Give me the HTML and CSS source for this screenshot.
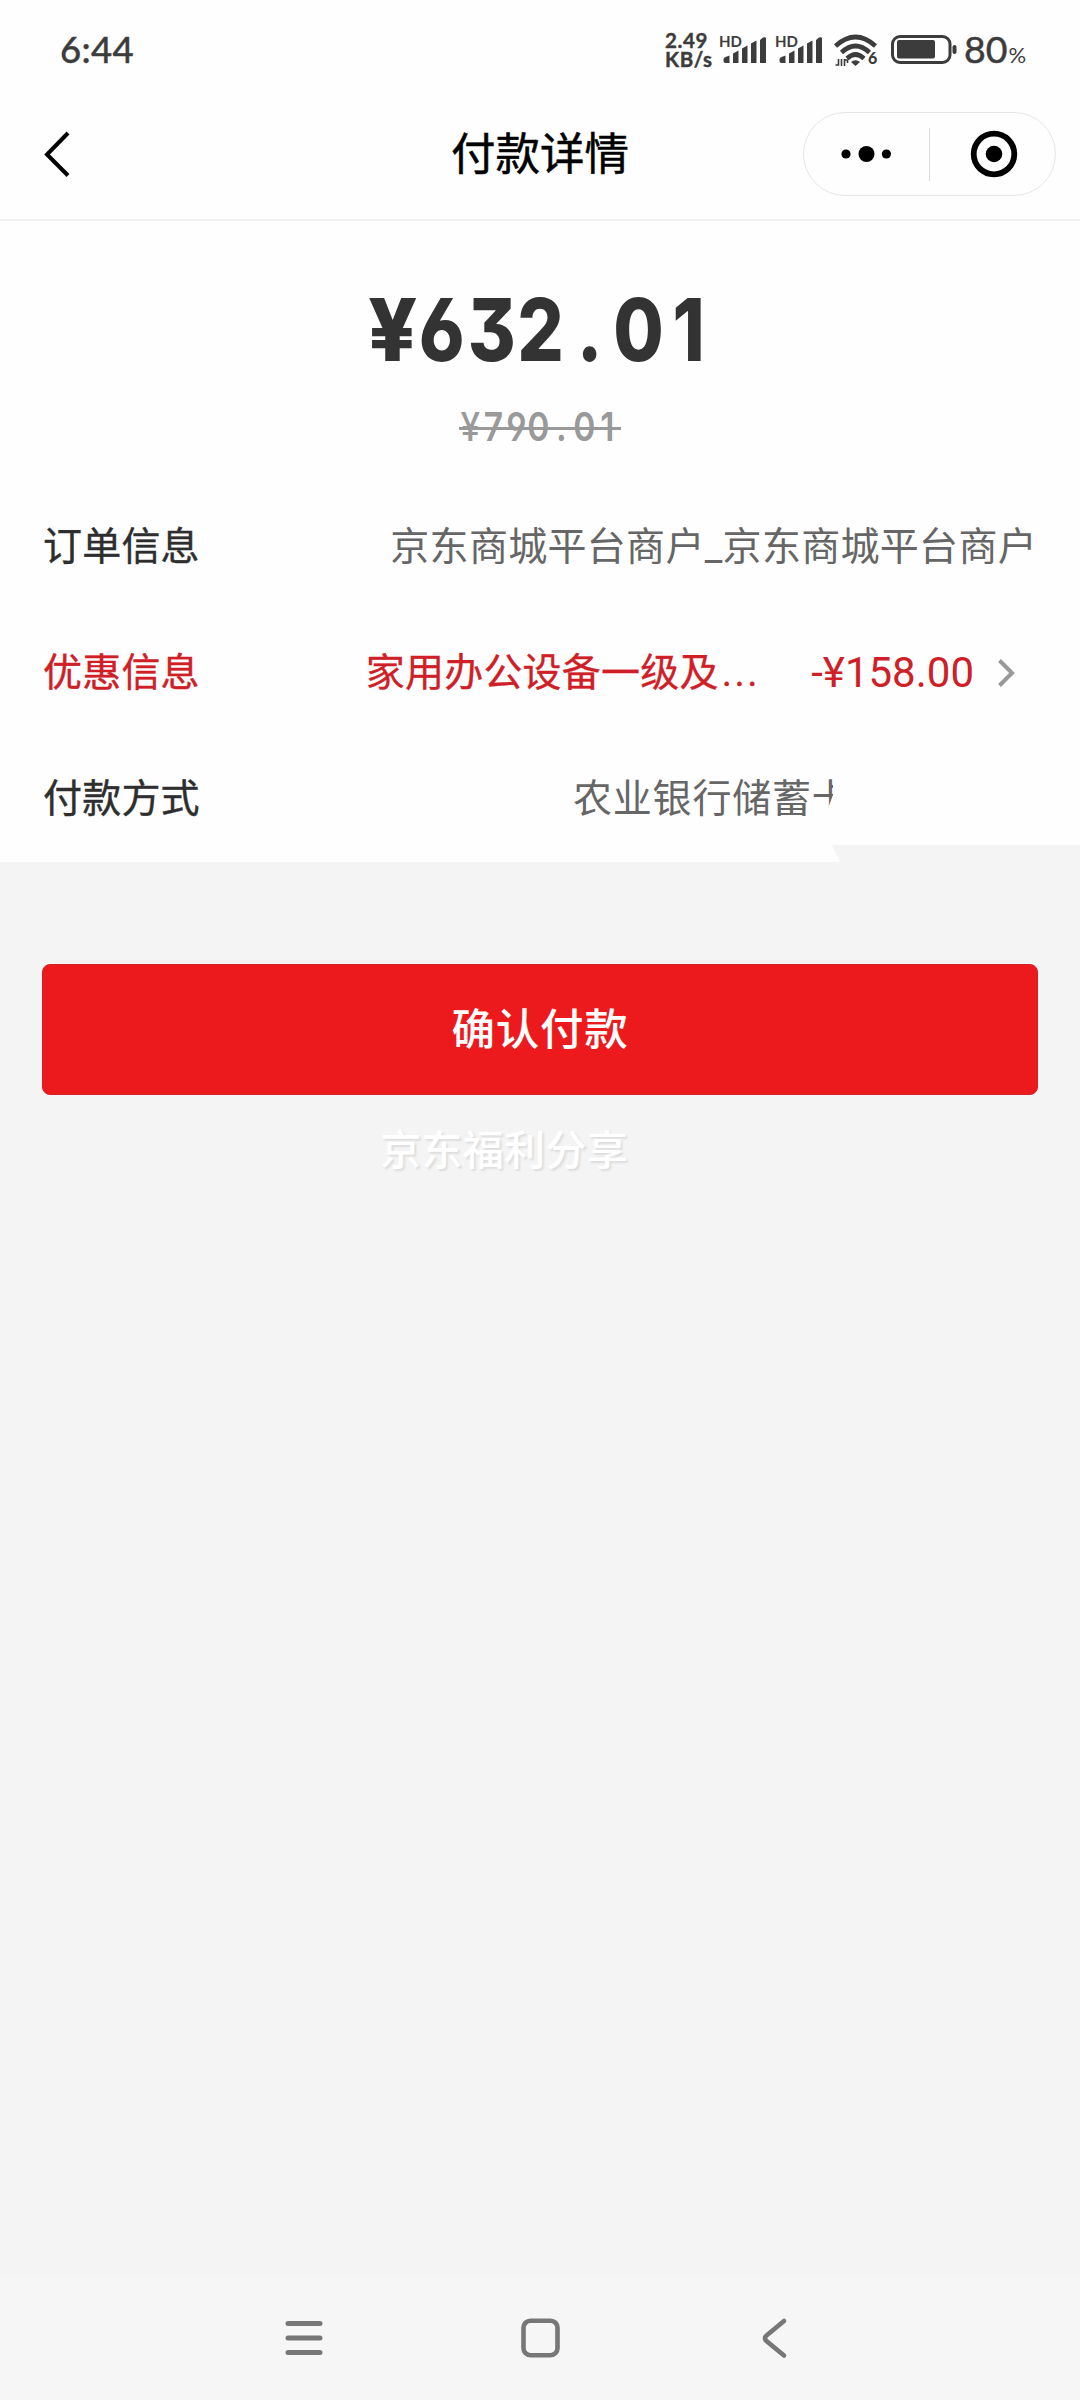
FILE: index.html
```html
<!DOCTYPE html>
<html lang="zh-CN">
<head>
<meta charset="utf-8">
<title>付款详情</title>
<link rel="stylesheet" href="styles.css">
</head>
<body>
<svg width="0" height="0" class="defs">
  <defs>
    <g id="signal">
      <path d="M4.500 27v-1.500q0-2 2-2.500l4-1.500v7.500h-4q-2 0-2-2Z"/>
      <path d="M14 29v-9.500l5.500-3v12.500ZM23 29v-14.500l5.500-3v17.500ZM32 29v-19.500l5.500-3v22.500ZM41 29v-23l3-2.500q3-1 3 1v24.500Z"/>
    </g>
  </defs>
</svg>
<header class="status">
  <div class="clock">6:44</div>
  <div class="status-icons">
    <div class="speed"><span>2.49</span><span>KB/s</span></div>
    <div class="cell"><span class="hd">HD</span><svg width="50" height="36" viewBox="0 0 50 36"><use href="#signal"/></svg></div>
    <div class="cell"><span class="hd">HD</span><svg width="50" height="36" viewBox="0 0 50 36"><use href="#signal"/></svg></div>
    <div class="wifi">
      <svg width="44" height="36" viewBox="0 0 44 36">
        <g fill="none" stroke="#3c3c3c" stroke-width="4.600">
          <path d="M1.500 12Q21.500-6 41.500 12"/>
          <path d="M7.500 18.500Q21.500 5.500 35.500 18.500"/>
          <path d="M13 24.500Q21.500 16.500 30 24.500"/>
        </g>
        <path d="M17 28q4.500-3.500 9 0l-4.500 4Z"/>
        <path d="M4.500 25v6h-3M7.500 25v7M10.500 25v7M10.500 26h3v3" fill="none" stroke="#3c3c3c" stroke-width="1.600"/>
      </svg>
      <span class="gen">6</span>
    </div>
    <svg class="battery" width="66" height="30" viewBox="0 0 66 30">
      <rect x="1.500" y="2.500" width="57.500" height="26" rx="7.500" fill="none" stroke="#3c3c3c" stroke-width="3"/>
      <rect x="6" y="6" width="38" height="18.500" rx="2"/>
      <rect x="61.500" y="11" width="4" height="9" rx="2"/>
    </svg>
    <div class="percent">80<small>%</small></div>
  </div>
</header>
<nav class="titlebar">
  <svg class="back" width="28" height="48" viewBox="0 0 28 48"><path d="M25 3 4 24.500 25 45.500" fill="none" stroke="#000" stroke-width="4"/></svg>
  <h1>付款详情</h1>
  <div class="capsule">
    <svg width="50" height="20" viewBox="0 0 50 20"><circle cx="5" cy="10" r="4.600"/><circle cx="25.500" cy="10" r="8"/><circle cx="45.400" cy="10" r="4.600"/></svg>
    <i></i>
    <svg width="48" height="48" viewBox="0 0 48 48"><circle cx="24" cy="24" r="20.300" fill="none" stroke="#000" stroke-width="5.800"/><circle cx="24" cy="24" r="8.300"/></svg>
  </div>
</nav>
<main>
  <section class="bill">
    <div class="total"><span class="yen">¥</span><span>6</span><span>3</span><span>2</span><span>.</span><span>0</span><span>1</span></div>
    <div class="original"><span class="yen">¥</span><span>7</span><span>9</span><span>0</span><span>.</span><span>0</span><span>1</span></div>
    <div class="row"><span class="label">订单信息</span><span class="value">京东商城平台商户_京东商城平台商户</span></div>
    <div class="row promo"><span class="label">优惠信息</span><span class="value">家用办公设备一级及<span class="dots">...</span></span><span class="amount">-¥158.00</span>
      <svg width="20" height="30" viewBox="0 0 20 30"><path d="M2.500 2.500 15 15 2.500 27.500" fill="none" stroke="#999" stroke-width="4"/></svg></div>
    <div class="row method"><span class="label">付款方式</span><span class="value">农业银行储蓄卡</span></div>
  </section>
  <button class="pay">确认付款</button>
  <p class="signature">京东福利分享</p>
</main>
<footer class="sysnav">
  <svg width="40" height="44" viewBox="0 0 40 44"><path d="M4 7.500h32M4 22h32M4 36.500h32" stroke-width="5"/></svg>
  <svg width="44" height="44" viewBox="0 0 44 44"><rect x="4.500" y="4.700" width="34" height="34.500" rx="7" stroke-width="4.600"/></svg>
  <svg width="32" height="44" viewBox="0 0 32 44"><path d="M26 5 8.500 19.500q-3 2.500 0 5.500L26 39.500" stroke-width="4.600"/></svg>
</footer>
</body>
</html>
```
FILE: styles.css
```css
* { box-sizing: border-box; }
body {
  margin: 0;
  width: 1080px;
  height: 2400px;
  display: flex;
  flex-direction: column;
  background: #f4f4f4;
  font-family: Roboto, "Noto Sans CJK SC", sans-serif;
  color: #2e2e2e;
}
.defs { position: absolute; }
.status {
  height: 100px;
  background: #fefefe;
  display: flex;
  justify-content: space-between;
  padding: 0 52px 0 60px;
  color: #3c3c3c;
  fill: #3c3c3c;
}
.clock {
  font: 500 36.500px/98px Lato, sans-serif;
  -webkit-text-stroke: .4px #3c3c3c;
  letter-spacing: .3px;
}
.status-icons { display: flex; align-items: flex-start; padding-top: 34px; }
.speed {
  width: 54px;
  font: 700 20.500px/19px Lato, sans-serif;
  letter-spacing: .6px;
  -webkit-text-stroke: .4px #3c3c3c;
  display: flex;
  flex-direction: column;
  margin-top: -3px;
}
.cell { position: relative; width: 56px; height: 36px; }
.cell svg { display: block; }
.hd { position: absolute; left: 0; top: 0; font: 700 15px/14px Lato, sans-serif; }
.wifi { position: relative; width: 60px; padding-left: 3px; }
.gen { position: absolute; left: 37px; top: 16px; font: 900 16px/16px Lato, sans-serif; }
.percent { font: 400 37.500px/34px Lato, sans-serif; margin: -2px 0 0 7px; white-space: nowrap; -webkit-text-stroke: .5px #3c3c3c; width: 64px; }
.percent small { font-size: 22px; margin-left: 1px; -webkit-text-stroke: 0; }
.titlebar {
  height: 121px;
  background: #fefefe;
  border-bottom: 2px solid #f0f0f0;
  display: grid;
  grid-template-columns: 253px 1fr 253px;
  align-items: center;
  padding: 0 24px 11px;
}
.back { margin-left: 19px; }
h1 { margin: 2px 0 0; text-align: center; font-size: 44.500px; line-height: 60px; font-weight: 400; color: #000; -webkit-text-stroke: .5px #000; }
.capsule {
  height: 84px;
  border: 1.500px solid #e6e6e6;
  border-radius: 42px;
  display: flex;
  align-items: center;
  justify-content: space-between;
  padding: 0 37px;
}
.capsule i { width: 1px; height: 53px; background: #dcdcdc; margin-right: 2px; }
main { flex: 1; }
.bill {
  height: 641px;
  background: #fefefe;
  clip-path: polygon(0 0, 1080px 0, 1080px 624px, 832px 624px, 840px 641px, 0 641px);
}
.total, .original {
  display: flex;
  width: max-content;
  position: relative;
  font-family: Inter, sans-serif;
  font-feature-settings: "cv03", "cv04", "cv09";
}
.total span, .original span { display: flex; justify-content: center; transform: scaleX(.84); }
.total { margin: 0 0 0 368px; padding-top: 59px; height: 175px; font-size: 87px; line-height: 100px; font-weight: 800; color: #333; }
.total span { width: 49.300px; }
.total .yen { transform: scaleX(.98); }
.original { margin-left: 459px; height: 88px; font-size: 40px; line-height: 62px; font-weight: 600; color: #999; }
.original span { width: 22.800px; }
.original .yen { transform: scaleX(.88); font-weight: 500; }
.original::after { content: ""; position: absolute; left: 0; right: -2px; top: 31px; height: 3px; background: #999; }
.row { height: 126px; padding: 0 43px 0 43px; display: flex; align-items: center; font-size: 39px; line-height: 60px; letter-spacing: .2px; white-space: nowrap; }
.label { -webkit-text-stroke: .4px currentColor; }
.value { margin-left: auto; color: #666; letter-spacing: .3px; }
.promo { color: #cf2027; padding-right: 63px; }
.promo .value { color: inherit; margin-left: 166px; letter-spacing: .2px; -webkit-text-stroke: .3px currentColor; }
.dots { letter-spacing: 2.500px; margin-left: 3px; }
.amount { margin-left: auto; font-size: 42px; margin-right: 23px; letter-spacing: 0; }
.method .value {
  width: 260px;
  overflow: hidden;
  margin-right: 204px;
  letter-spacing: .8px;
  clip-path: polygon(0 0, 260px 0, 260px 26px, 254px 42px, 254px 60px, 0 60px);
}
.pay {
  display: block;
  width: 996px;
  height: 131px;
  margin: 102px 42px 0;
  padding: 0 0 5px;
  border: 1px solid #d91f24;
  border-radius: 8px;
  background: #ed1a1d;
  color: #fff;
  font: 500 43.500px/60px "Noto Sans CJK SC", sans-serif;
  letter-spacing: .8px;
}
.signature { margin: 26px 0 0 380px; font-size: 41.300px; line-height: 60px; font-weight: 500; color: #fff; text-shadow: 2px 2px 2px #ddd; }
.sysnav {
  height: 125px;
  background: #f6f6f6;
  display: flex;
  justify-content: space-between;
  padding: 41px 290px 0 284px;
  fill: none;
  stroke: #777;
  stroke-linecap: round;
}
```
